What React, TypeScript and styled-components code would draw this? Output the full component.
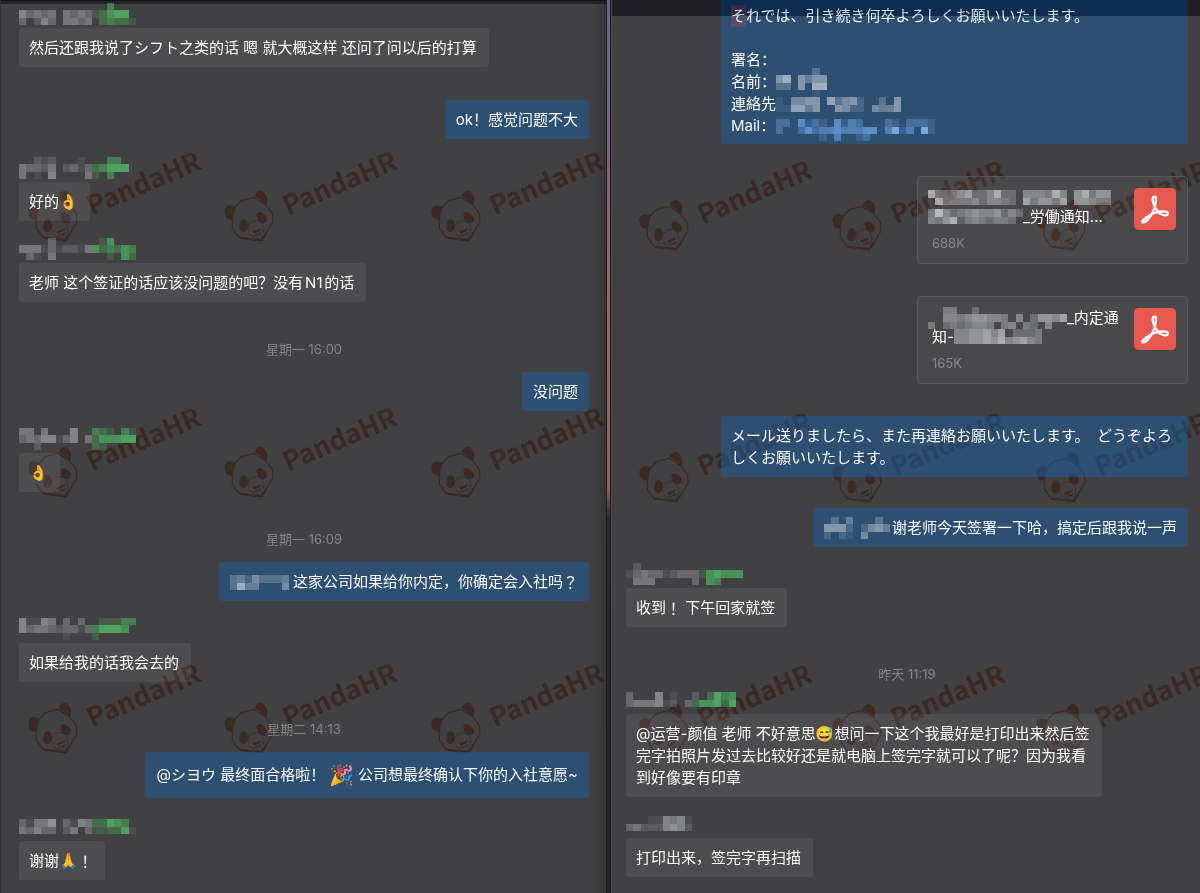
import React from "react";
import styled, { createGlobalStyle } from "styled-components";

const GlobalStyle = createGlobalStyle`
  * { box-sizing: border-box; }
  body {
    margin: 0;
    background: #414143;
    color: #fafafa;
    font-family: Inter, "Noto Sans CJK SC", "Noto Color Emoji", sans-serif;
    font-size: 15px;
    line-height: 22px;
  }
`;

const Screen = styled.main`
  display: grid;
  grid-template-columns: 607fr 4px 589fr;
  min-height: 100vh;
  overflow: hidden;
`;

const Pane = styled.section<{ $side: "left" | "right" }>`
  position: relative;
  min-width: 0;
  overflow: hidden;
  background: #414143;
  border-left: 1px solid ${(p) => (p.$side === "left" ? "#303032" : "#4b4b4d")};
  padding: ${(p) => (p.$side === "left" ? "2px 18px 12px 18px" : "0 12px 12px 14px")};
`;

const LeftStrip = styled.div`
  position: absolute;
  inset: 0 0 auto 0;
  height: 4px;
  background: #232325;
  border-top: 1px solid #131315;
`;

const EdgeShade = styled.div`
  position: absolute;
  inset: 0 0 0 auto;
  width: 14px;
  background: linear-gradient(90deg, rgba(20, 20, 20, 0), rgba(20, 20, 20, 0.28));
  border-right: 1px solid #1d1d1f;
`;

const RightStrip = styled.div`
  position: absolute;
  inset: 0 0 auto 0;
  height: 16px;
  z-index: 2;
  background: #222222;
  mix-blend-mode: difference;
`;

const Divider = styled.div`
  background: linear-gradient(180deg, #6c6280 0%, #776378 18%, #94695f 34%, #8a5f5c 55%, #2a2729 58%, #232224 100%);
  border-right: 1px solid #1d1d1f;
`;

const StampGrid = styled.div<{ $top: number; $pitch: number; $cols: string }>`
  position: absolute;
  inset: 0;
  display: grid;
  grid-template-columns: ${(p) => p.$cols};
  grid-auto-rows: ${(p) => p.$pitch}px;
  padding: ${(p) => p.$top}px 0 0 27px;
  overflow: hidden;
`;

const StampSvg = styled.svg`
  width: 184px;
  height: 96px;
  overflow: visible;
  color: #3b2a24;
  font-family: "Noto Sans CJK SC", "Noto Sans", sans-serif;
  font-weight: 700;
`;

const Log = styled.ol`
  position: relative;
  z-index: 1;
  display: flex;
  flex-direction: column;
  margin: 0;
  padding: 0;
  list-style: none;
`;

const Entry = styled.li<{ $out?: boolean; $gap: number }>`
  display: flex;
  flex-direction: column;
  align-items: ${(p) => (p.$out ? "flex-end" : "flex-start")};
  margin-top: ${(p) => p.$gap}px;
`;

const Sender = styled.div`
  display: flex;
  align-items: center;
  height: 26px;
  padding-bottom: 3px;
`;

const Bubble = styled.div<{ $out?: boolean; $wide?: boolean; $cut?: boolean; $tall?: boolean }>`
  width: ${(p) => (p.$wide ? "467px" : "auto")};
  max-width: 100%;
  padding: ${(p) =>
    p.$cut
      ? "5px 7px 7px 10px"
      : p.$tall
        ? "12px 11px"
        : p.$wide
          ? "9px 7px 8px 10px"
          : p.$out
            ? "9px 11px 8px 11px"
            : "9px 12px 8px 10px"};
  border-radius: ${(p) => (p.$cut ? "0 0 3px 3px" : "3px")};
  background: ${(p) => (p.$out ? "rgba(23, 93, 161, 0.5)" : "rgba(255, 255, 255, 0.065)")};
`;

const Line = styled.div`
  display: flex;
  align-items: center;
  height: 22px;
  white-space: pre;
  text-autospace: normal;
`;

const JaLine = styled(Line)`
  font-family: Inter, "Noto Sans CJK JP", sans-serif;
`;

const Ja = styled.span`
  font-family: "Noto Sans CJK JP", sans-serif;
`;

const Party = styled.span`
  font-size: 20px;
  padding: 0 4px;
`;

const Tint = styled.span`
  background: rgba(190, 80, 90, 0.3);
`;

const Stamp = styled.time`
  align-self: center;
  color: #858587;
  font-size: 13px;
  line-height: 22px;
`;

const FileCard = styled.a`
  display: flex;
  justify-content: space-between;
  width: 271px;
  height: 88px;
  padding: 11px 11px 8px 14px;
  border: 1px solid #565658;
  border-radius: 4px;
  background: rgba(255, 255, 255, 0.045);
  color: inherit;
  text-decoration: none;
`;

const FileLine = styled.div<{ $lead?: boolean }>`
  display: flex;
  align-items: center;
  height: 19px;
  margin-left: ${(p) => (p.$lead ? "-4px" : "0")};
  white-space: pre;
`;

const FileSize = styled.div`
  margin-top: 6px;
  color: #868688;
  font-size: 13px;
`;

const PdfBadge = styled.svg`
  width: 42px;
  height: 42px;
  flex: none;
`;

const MosaicSvg = styled.svg`
  flex: none;
  display: block;
`;

const shades: Record<string, string> = {
  a: "rgba(70,150,85,.3)",
  b: "rgba(70,155,85,.5)",
  c: "rgba(72,158,88,.68)",
  d: "rgba(74,160,90,.85)",
  e: "#4ba35d",
  p: "rgba(100,150,215,.25)",
  q: "rgba(100,150,215,.45)",
  r: "rgba(100,150,215,.65)",
  s: "rgba(104,155,220,.8)",
  t: "#78a8e4",
};

function Mosaic({ rows, gap = 0 }: { rows: string[]; gap?: number }) {
  const cols = Math.max(...rows.map((r) => r.length));
  return (
    <MosaicSvg
      width={Math.round((cols * 22) / 3) + gap}
      height={Math.round((rows.length * 22) / 3)}
      viewBox={`0 0 ${cols * 22 + gap * 3} ${rows.length * 22}`}
      shapeRendering="crispEdges"
      aria-hidden="true"
    >
      {rows.flatMap((row, y) =>
        [...row].map((c, x) =>
          c === "." ? null : (
            <rect
              key={`${x}-${y}`}
              x={x * 22}
              y={y * 22}
              width={22}
              height={22}
              fill={shades[c] ?? `rgba(225,230,235,${Number(c) * 0.08})`}
            />
          )
        )
      )}
    </MosaicSvg>
  );
}

function PandaStamp() {
  return (
    <StampSvg viewBox="0 0 552 288" aria-hidden="true">
      <g fill="currentColor">
        <path d="M3 192C-3 177 7 163 22 166L36 171L28 184L23 209C12 210 3 203 3 192Z" />
        <path d="M93 139C95 126 107 118 119 126C130 135 133 153 126 167L112 151Z" />
        <path d="M50 212C58 204 70 208 71 220C73 232 69 245 60 247C50 248 45 240 46 229Z" />
        <path d="M97 196C97 187 107 184 115 190C126 196 133 207 126 217C117 224 106 218 101 211Z" />
        <path d="M84 245L112 235L106 243L90 252ZM88 258L112 246L110 254Z" />
      </g>
      <g fill="none" stroke="currentColor" strokeLinejoin="round">
        <path strokeWidth="4" d="M32 173L52 152L90 142L124 163L145 190L147 216L113 272L45 262L25 234L25 205Z" />
        <path strokeWidth="6" d="M47 263L112 271L126 250" />
        <path strokeWidth="2" d="M71 233C74 214 94 206 108 216C126 229 120 255 106 266C90 268 70 254 71 233Z" />
      </g>
      <text fill="currentColor" fontSize="80" transform="translate(191 197) rotate(-23)">
        PandaHR
      </text>
    </StampSvg>
  );
}

function Stamps(props: { top: number; pitch: number; cols: string }) {
  return (
    <StampGrid $top={props.top} $pitch={props.pitch} $cols={props.cols}>
      {Array.from({ length: 9 }, (_, i) => (
        <PandaStamp key={i} />
      ))}
    </StampGrid>
  );
}

function PdfIcon() {
  return (
    <PdfBadge viewBox="0 0 126 126" aria-label="PDF">
      <rect width="126" height="126" rx="14" fill="#e95950" />
      <path
        d="M62 25C53 25 55 43 63 58C70 71 82 82 94 82C105 82 104 72 94 71C78 68 55 75 38 88C25 96 22 101 27 103C35 105 48 88 55 75C65 57 70 25 62 25Z"
        fill="none"
        stroke="#fff"
        strokeWidth="7"
        strokeLinejoin="round"
      />
    </PdfBadge>
  );
}

function Incoming(props: { name: string[]; gap?: number; children: React.ReactNode }) {
  return (
    <Entry $gap={props.gap ?? 16}>
      <Sender>
        <Mosaic rows={props.name} />
      </Sender>
      <Bubble>{props.children}</Bubble>
    </Entry>
  );
}

function TimeMark({ children }: { children: string }) {
  return (
    <Entry $gap={36}>
      <Stamp>{children}</Stamp>
    </Entry>
  );
}

export default function App() {
  return (
    <>
      <GlobalStyle />
      <Screen>
        <Pane $side="left">
          <Stamps top={150} pitch={256} cols="196px 207px 1fr" />
          <LeftStrip />
          <EdgeShade />
          <Log>
            <Incoming gap={0} name={["............c...", "53434.4343abdee.", "3.253.4434.bcbba"]}>
              <Line>然后还跟我说了シフト之类的话 嗯 就大概这样 还问了问以后的打算</Line>
            </Incoming>
            <Entry $out $gap={33}>
              <Bubble $out>
                <Line>ok！感觉问题不大</Line>
              </Bubble>
            </Entry>
            <Incoming gap={17} name={["..212...1...cc..", "43324.2313bceee.", "4.1.5....4a.c..."]}>
              <Line>好的👌</Line>
            </Incoming>
            <Incoming name={["....3......ad...", "4441312214dbcbdc", ".31.4.......a.db"]}>
              <Line>老师 这个签证的话应该没问题的吧？没有N1的话</Line>
            </Incoming>
            <TimeMark>星期一 16:00</TimeMark>
            <Entry $out $gap={12}>
              <Bubble $out>
                <Line>没问题</Line>
              </Bubble>
            </Entry>
            <Incoming name={["44.4...5..cba.ca", "34355135.4bdddee", "..2.......ba...."]}>
              <Line>👌</Line>
            </Incoming>
            <TimeMark>星期一 16:09</TimeMark>
            <Entry $out $gap={12}>
              <Bubble $out>
                <Line>
                  <Mosaic gap={4} rows={["34253334", "3844...5"]} />
                  这家公司如果给你内定，你确定会入社吗<Ja>？</Ja>
                </Line>
              </Bubble>
            </Entry>
            <Incoming name={["51154.3.3..aaacc", "5344323313ceeed.", "......1...a....."]}>
              <Line>如果给我的话我会去的</Line>
            </Incoming>
            <TimeMark>星期二 14:13</TimeMark>
            <Entry $out $gap={12}>
              <Bubble $out $tall>
                <Line>
                  @シヨウ 最终面合格啦！<Party>🎉</Party>公司想最终确认下你的入社意愿~
                </Line>
              </Bubble>
            </Entry>
            <Incoming gap={17} name={["31446.3154bbedc.", "43533.24.3aabbe1"]}>
              <Line>
                谢谢🙏<Ja>！</Ja>
              </Line>
            </Incoming>
          </Log>
        </Pane>

        <Divider />

        <Pane $side="right">
          <Stamps top={159} pitch={252} cols="193px 204px 1fr" />
          <Log>
            <Entry $out $gap={0}>
              <Bubble $out $wide $cut>
                <JaLine>
                  <Tint>そ</Tint>れでは、引き続き何卒よろしくお願いいたします。
                </JaLine>
                <Line />
                <Line>署名：</Line>
                <Line>
                  名前：
                  <Mosaic rows={[".....3.", "68.6466", "33.6.88", ".....1."]} />
                </Line>
                <Line>
                  連絡先
                  <Mosaic rows={["1.5566.73562..3.6", "117746..6522.5446"]} />
                </Line>
                <Line>
                  Mail：
                  <Mosaic
                    rows={["", "qq.spqp.sprq...qp.qqqp", "q..qsqrrsrrrss.rtpr.tp", "......p.r..pq........."]}
                  />
                </Line>
              </Bubble>
            </Entry>
            <Entry $out $gap={32}>
              <FileCard href="#labor-notice">
                <div>
                  <FileLine $lead>
                    <Mosaic rows={["843467335833.555485.68466", ".84444535543.746647.66544"]} />
                  </FileLine>
                  <FileLine $lead>
                    <Mosaic rows={["4953456556353", "546824543443."]} />
                    _労働通知...
                  </FileLine>
                  <FileSize>688K</FileSize>
                </div>
                <PdfIcon />
              </FileCard>
            </Entry>
            <Entry $out $gap={32}>
              <FileCard href="#offer-notice">
                <div>
                  <FileLine $lead>
                    <Mosaic rows={["..44..3............", "..554566554.5.36657", "4.3434554.45.43.5.."]} />
                    _内定通
                  </FileLine>
                  <FileLine>
                    知-
                    <Mosaic rows={["5566757.3334", "556676856754"]} />
                  </FileLine>
                  <FileSize>165K</FileSize>
                </div>
                <PdfIcon />
              </FileCard>
            </Entry>
            <Entry $out $gap={32}>
              <Bubble $out $wide>
                <JaLine>メール送りましたら、また再連絡お願いいたします。　どうぞよろ</JaLine>
                <JaLine>しくお願いいたします。</JaLine>
              </Bubble>
            </Entry>
            <Entry $out $gap={31}>
              <Bubble $out>
                <Line>
                  <Mosaic gap={2} rows={[".3.4...3.", "6662.2564", "2.21.5..."]} />
                  谢老师今天签署一下哈，搞定后跟我说一声
                </Line>
              </Bubble>
            </Entry>
            <Incoming gap={15} name={[".2..............", "1343312333adeddd", ".444.....3.dc..."]}>
              <Line>
                收到<Ja>！</Ja> 下午回家就签
              </Line>
            </Incoming>
            <TimeMark>昨天 11:19</TimeMark>
            <Incoming gap={3} name={["3...5.1..2.becd", "3444512.3bddebe"]}>
              <Line>@运营-颜值 老师 不好意思😅想问一下这个我最好是打印出来然后签</Line>
              <Line>完字拍照片发过去比较好还是就电脑上签完字就可以了呢？因为我看</Line>
              <Line>到好像要有印章</Line>
            </Incoming>
            <Incoming gap={15} name={["...115451", "342225652"]}>
              <Line>打印出来，签完字再扫描</Line>
            </Incoming>
          </Log>
          <RightStrip />
        </Pane>
      </Screen>
    </>
  );
}
